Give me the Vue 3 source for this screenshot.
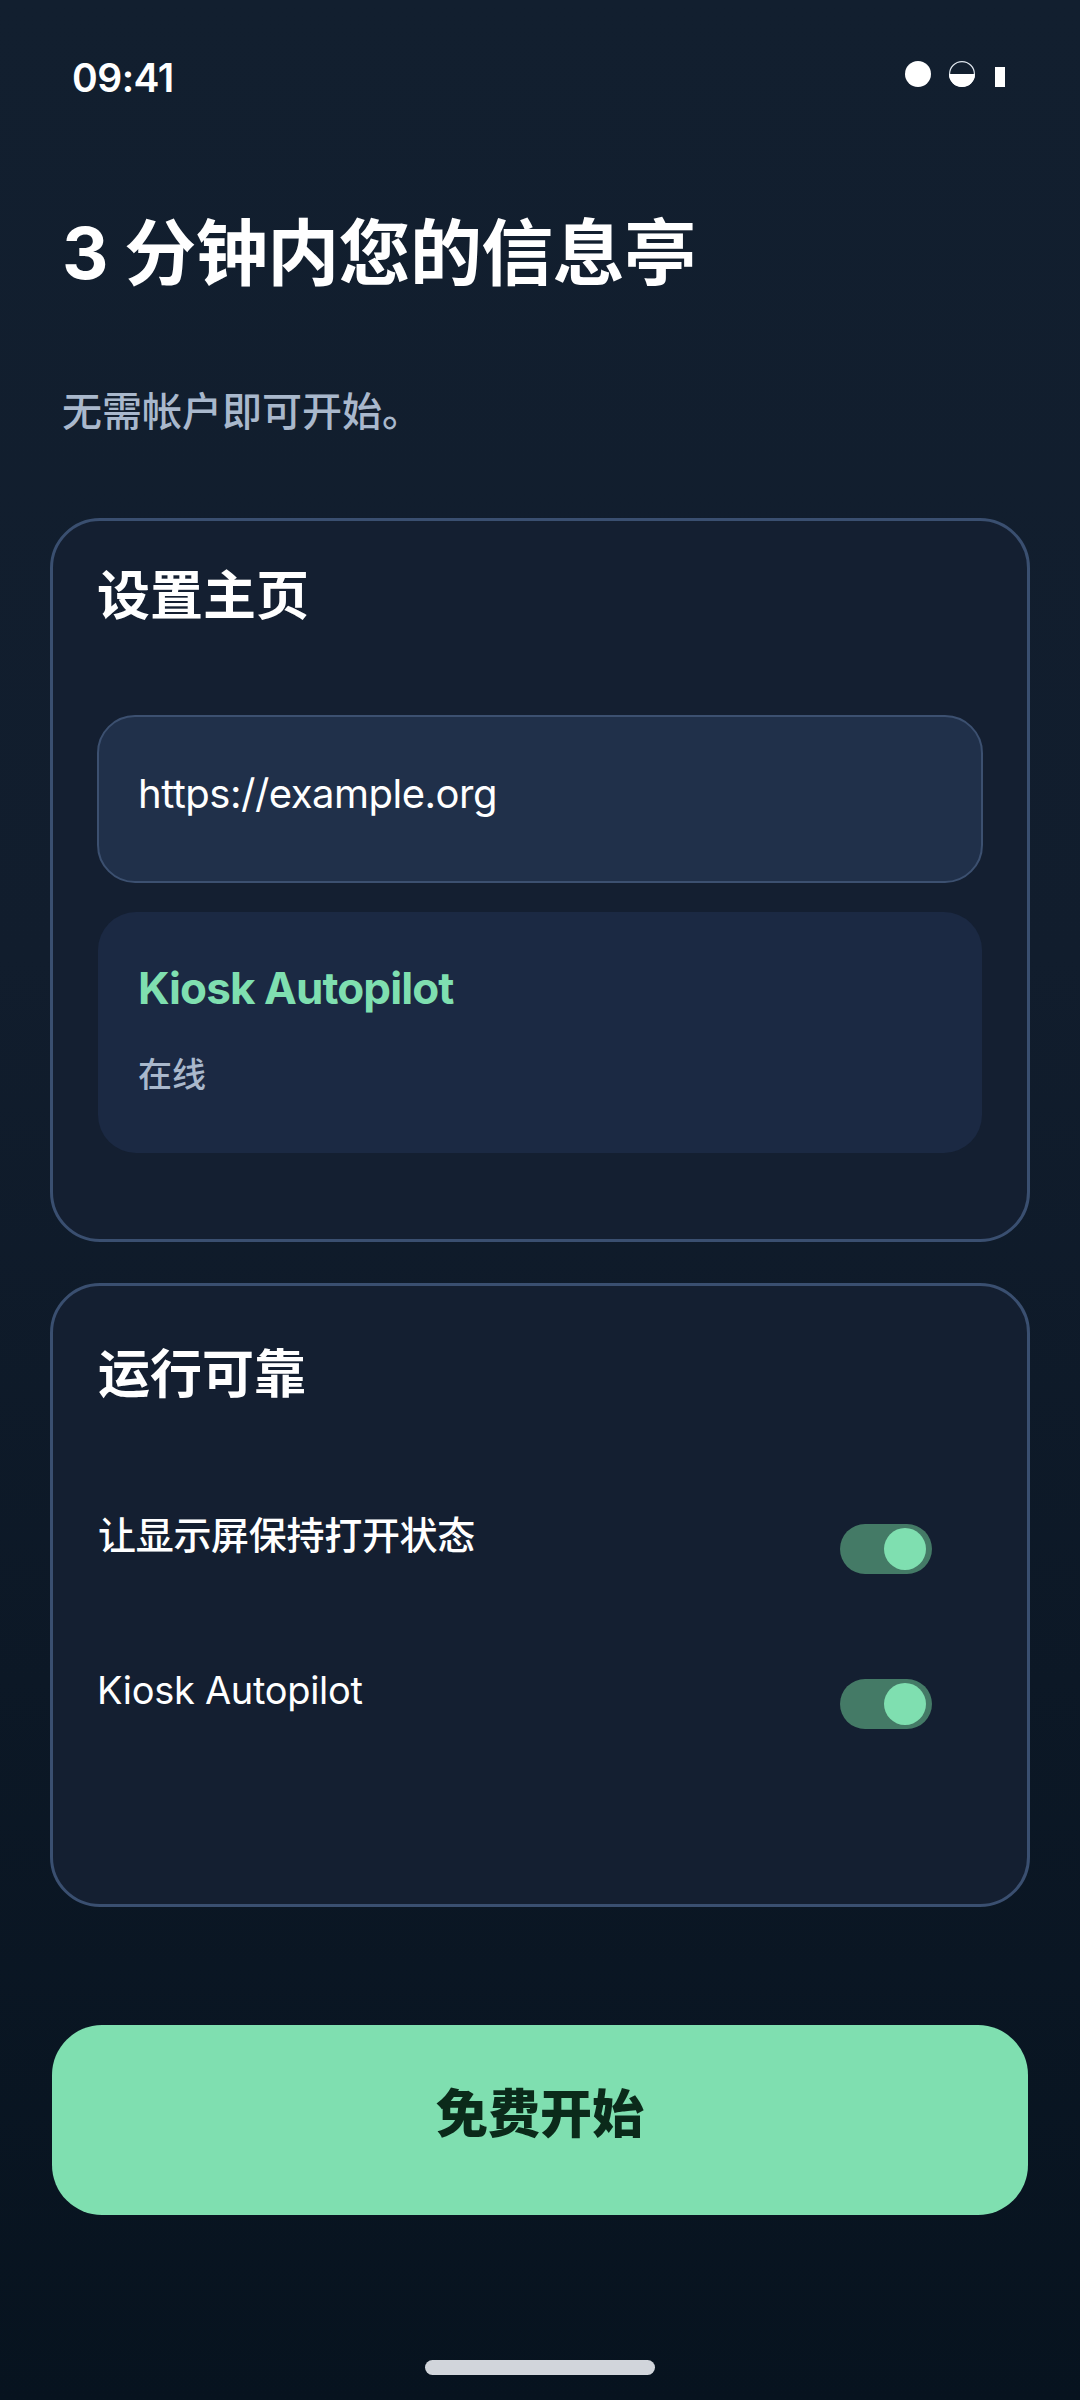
<template>
  <div class="screen">
    <div class="status">
      <span class="time">09:41</span>
      <div class="status-icons">
        <span class="dot"></span>
        <svg class="half" viewBox="0 0 26 26">
          <circle cx="13" cy="13" r="12.4" fill="none" stroke="#dfe6ee" stroke-width="1.2" />
          <path d="M0 13a13 13 0 0 0 26 0z" fill="#fff" />
        </svg>
        <span class="bar"></span>
      </div>
    </div>

    <h1 class="title">3 分钟内您的信息亭</h1>
    <p class="subtitle">无需帐户即可开始。</p>

    <section class="card first">
      <h2 class="card-title">设置主页</h2>
      <div class="input"><span>https://example.org</span></div>
      <div class="preview">
        <div class="preview-name">Kiosk Autopilot</div>
        <div class="preview-state">在线</div>
      </div>
    </section>

    <section class="card second">
      <h2 class="card-title">运行可靠</h2>
      <div v-for="row in rows" :key="row.label" class="row">
        <span class="row-label" :class="{ latin: row.latin }">{{ row.label }}</span>
        <span class="toggle"><span class="knob"></span></span>
      </div>
    </section>

    <button class="start">免费开始</button>
    <div class="home-bar"></div>
  </div>
</template>

<script setup>
const rows = [
  { label: '让显示屏保持打开状态', latin: false },
  { label: 'Kiosk Autopilot', latin: true },
]
</script>

<style>
html,
body {
  margin: 0;
  background: #07131f;
}
</style>

<style scoped>
.screen {
  box-sizing: border-box;
  width: 1080px;
  height: 2400px;
  padding: 0 52px;
  display: flex;
  flex-direction: column;
  background: linear-gradient(180deg, #121f2f 0%, #111d2d 40%, #07131f 100%);
  font-family: Inter, "Noto Sans CJK SC", sans-serif;
  color: #fff;
}

.status {
  height: 209px;
  flex: none;
  display: flex;
  justify-content: space-between;
  align-items: flex-start;
  padding: 0 23px 0 20px;
  box-sizing: border-box;
}

.time {
  margin-top: 54px;
  font-size: 39px;
  line-height: 48px;
  font-weight: 600;
  letter-spacing: -0.5px;
}

.status-icons {
  margin-top: 61px;
  display: flex;
  align-items: flex-end;
  gap: 18px;
}

.dot {
  width: 26px;
  height: 26px;
  border-radius: 50%;
  background: #fff;
}

.half {
  width: 26px;
  height: 26px;
  display: block;
}

.bar {
  width: 10px;
  height: 20px;
  margin-left: 2px;
  background: #fff;
}

.title {
  margin: 0 0 0 10px;
  font-size: 72px;
  line-height: 88px;
  font-weight: 700;
  letter-spacing: -0.6px;
}

.subtitle {
  margin: 87px 0 78px 10px;
  font-size: 40px;
  line-height: 56px;
  font-weight: 500;
  color: #a9b8cc;
}

.card {
  box-sizing: border-box;
  margin-left: -2px;
  margin-right: -2px;
  border: 3px solid #3a4f70;
  border-radius: 50px;
  background: #141f31;
  padding: 43px 44px 0;
}

.first {
  height: 724px;
}

.second {
  height: 624px;
  margin-top: 41px;
  padding-top: 57px;
}

.card-title {
  margin: 0;
  font-size: 53px;
  line-height: 64px;
  font-weight: 700;
}

.second .card-title {
  margin-left: 1px;
  font-size: 52px;
}

.input {
  box-sizing: border-box;
  height: 168px;
  margin-top: 87px;
  padding: 0 39px 12px;
  display: flex;
  align-items: center;
  border: 2px solid #3c5070;
  border-radius: 38px;
  background: #20304a;
  font-size: 40px;
  letter-spacing: -0.5px;
}

.preview {
  box-sizing: border-box;
  height: 241px;
  margin: 29px 1px 0;
  padding: 48px 40px 0;
  border-radius: 38px;
  background: #1b2943;
}

.preview-name {
  font-size: 44px;
  line-height: 56px;
  font-weight: 700;
  letter-spacing: -0.9px;
  color: #7fdfb0;
}

.preview-state {
  margin-top: 37px;
  font-size: 34px;
  line-height: 44px;
  font-weight: 500;
  color: #a9b8cc;
}

.row {
  display: flex;
  justify-content: space-between;
  align-items: flex-start;
  padding-right: 51px;
  height: 155px;
}

.card-title + .row {
  margin-top: 103px;
}

.row-label {
  margin-left: 1px;
  font-size: 38px;
  line-height: 50px;
  font-weight: 500;
  letter-spacing: -0.3px;
}

.row-label.latin {
  margin-left: 0;
  font-weight: 400;
}

.toggle {
  box-sizing: border-box;
  width: 92px;
  height: 50px;
  margin-top: 14px;
  padding: 4px 6px;
  display: flex;
  justify-content: flex-end;
  border-radius: 25px;
  background: #447a66;
}

.knob {
  width: 42px;
  height: 42px;
  border-radius: 50%;
  background: #7fdfb0;
}

.start {
  height: 190px;
  margin-top: 118px;
  flex: none;
  border: none;
  border-radius: 50px;
  background: #7fdfb0;
  color: #0b2a1a;
  font-family: inherit;
  font-size: 52px;
  font-weight: 800;
  padding: 0 0 20px;
}

.home-bar {
  align-self: center;
  width: 230px;
  height: 15px;
  margin-top: 145px;
  border-radius: 8px;
  background: #d1d5db;
}
</style>
